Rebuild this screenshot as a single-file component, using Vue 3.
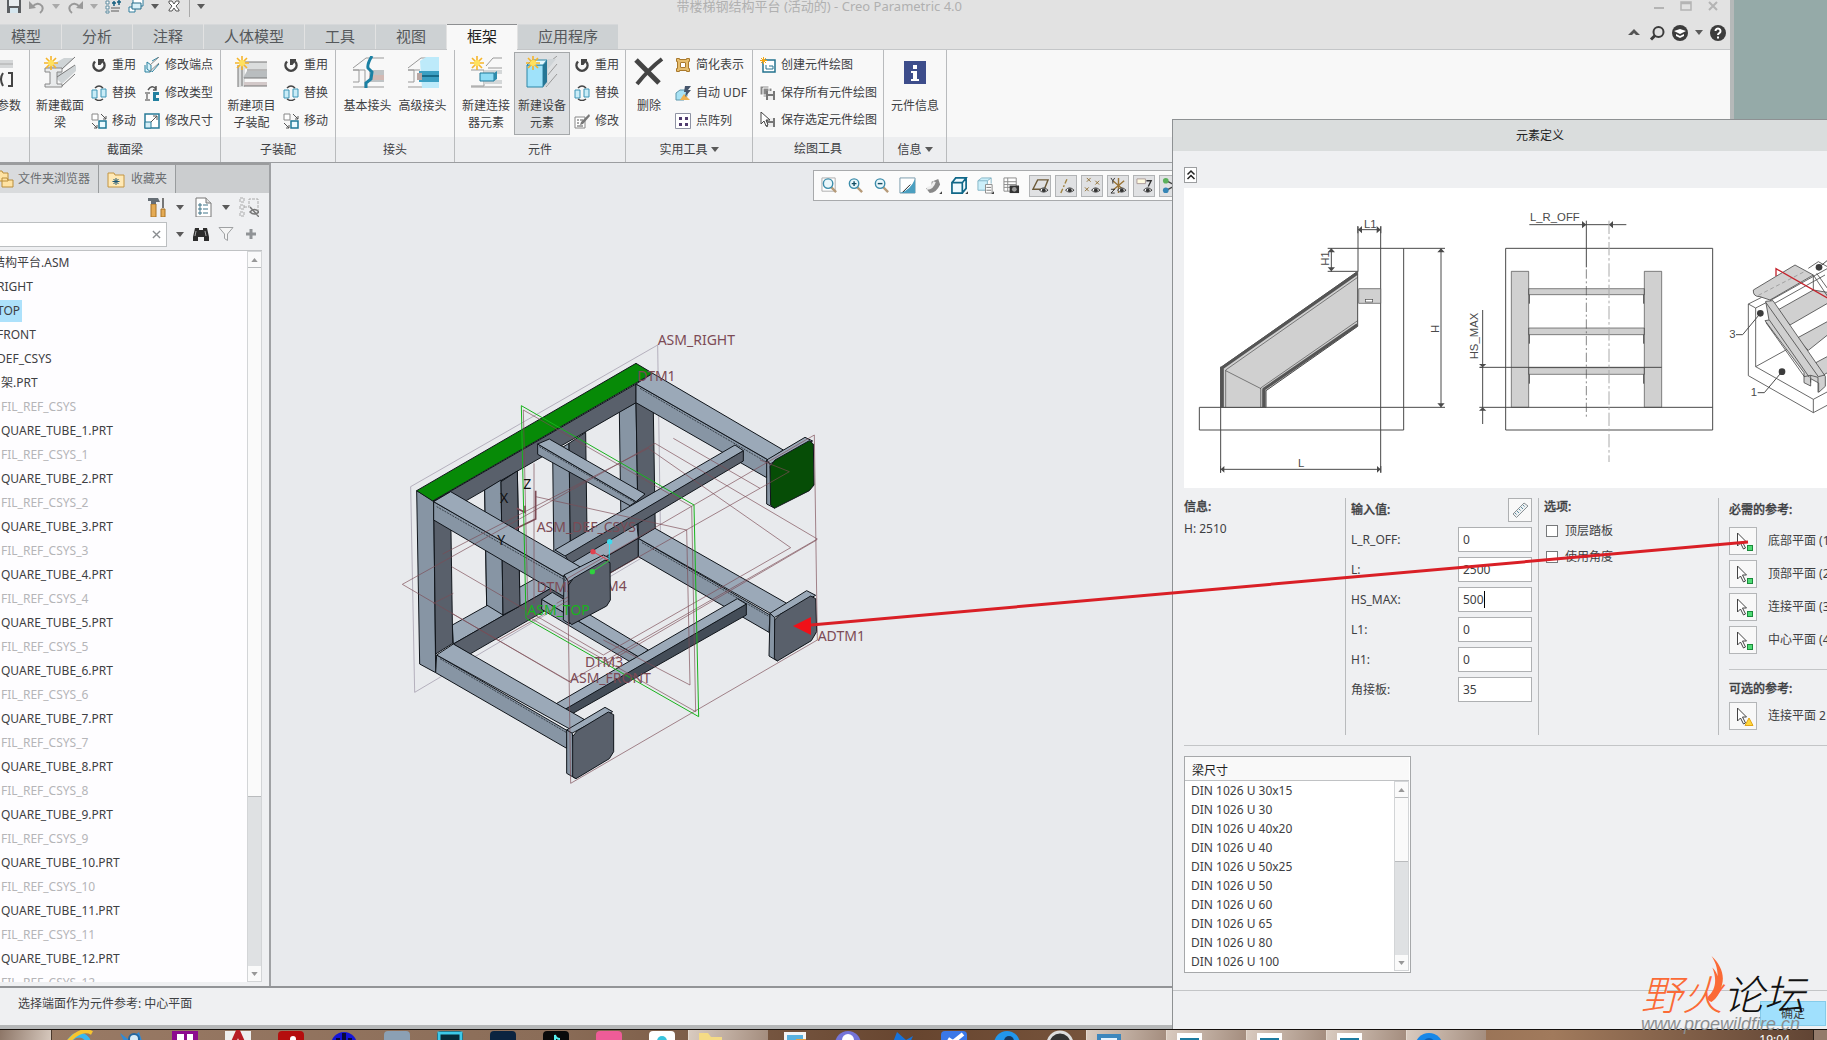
<template>
  <div class="desktop">
    <div class="workspace">
      <main class="creo">
        <header class="titlebar">
          <div class="quick">
            <template v-for="(q, i) in quickTools" :key="i">
              <span v-if="q === '|'" class="quick-sep"></span>
              <button v-else :class="q.startsWith('caret') ? 'caret-btn' : 'quick-btn'" :aria-label="q">
                <svg :viewBox="q.startsWith('caret') ? '0 0 8 5' : '0 0 16 16'" v-html="icons[q]"></svg>
              </button>
            </template>
          </div>
          <h1>带楼梯钢结构平台 (活动的) - Creo Parametric 4.0</h1>
          <div class="window-buttons">
            <button aria-label="最小化"><svg viewBox="0 0 12 12"><path d="M1 8h10" stroke="#b4b4b4" stroke-width="2" /></svg></button>
            <button aria-label="最大化"><svg viewBox="0 0 12 12"><path d="M1 2h10v8H1zM1 3.500h10" fill="none" stroke="#b4b4b4" stroke-width="1.500" /></svg></button>
            <button aria-label="关闭"><svg viewBox="0 0 12 12"><path d="M2 2l8 8M10 2l-8 8" stroke="#b4b4b4" stroke-width="2" /></svg></button>
          </div>
        </header>

        <nav class="tabs">
          <button v-for="tab in tabs" :key="tab" :class="['tab', { active: tab === activeTab }]" @click="activeTab = tab">{{ tab }}</button>
          <div class="tab-tools">
            <button aria-label="折叠"><svg viewBox="0 0 16 16"><path d="M2 10l6-6 6 6h-4L8 8l-2 2z" fill="#555" /></svg></button>
            <button aria-label="搜索"><svg viewBox="0 0 16 16"><circle cx="9.500" cy="7" r="5" fill="none" stroke="#3c3c3c" stroke-width="2" /><path d="M6 10.500L2 14.500" stroke="#3c3c3c" stroke-width="3" /></svg></button>
            <button aria-label="学习"><svg viewBox="0 0 16 16"><circle cx="8" cy="8" r="8" fill="#3c3c3c" /><path d="M2 6l6-2 6 2-6 3zM4 9l4 2 4-2v2l-4 2-4-2z" fill="#fff" /></svg></button>
            <button class="caret-btn" aria-label="更多"><svg viewBox="0 0 8 5" v-html="icons.caret"></svg></button>
            <button aria-label="帮助"><svg viewBox="0 0 16 16"><circle cx="8" cy="8" r="8" fill="#3c3c3c" /><path d="M5.500 6a2.500 2.500 0 1 1 3.800 2.100C8.300 8.700 8 9 8 10M8 11.500v2" fill="none" stroke="#fff" stroke-width="2" /></svg></button>
          </div>
        </nav>

        <section class="ribbon">
          <div v-for="(group, g) in groups" :key="g" :class="['group', group.cls]">
            <div class="group-body">
              <button v-for="b in group.big" :key="b.icon" :class="['big', { pressed: b.pressed }]">
                <svg viewBox="0 0 32 32" v-html="icons[b.icon]"></svg>
                <span v-for="line in b.lines" :key="line">{{ line }}</span>
              </button>
              <div v-for="(col, c) in group.cols" :key="c" class="small-col">
                <button v-for="s in col" :key="s[1]" class="small">
                  <svg viewBox="0 0 16 16" v-html="icons[s[0]]"></svg>
                  <span>{{ s[1] }}</span>
                </button>
              </div>
            </div>
            <div class="group-label">
              {{ group.label }}
              <svg v-if="group.menu" viewBox="0 0 8 5" v-html="icons.caret"></svg>
            </div>
          </div>
        </section>

        <div class="body">
          <aside class="navigator">
            <div class="nav-tabs">
              <button class="nav-tab browser"><svg viewBox="0 0 18 18" v-html="icons.folders"></svg>文件夹浏览器</button>
              <button class="nav-tab"><svg viewBox="0 0 18 18" v-html="icons.favorites"></svg>收藏夹</button>
            </div>
            <div class="nav-tools">
              <button aria-label="设置"><svg viewBox="0 0 20 20" v-html="icons.hammer"></svg></button>
              <button class="caret-btn" aria-label="设置菜单"><svg viewBox="0 0 8 5" v-html="icons.caret"></svg></button>
              <button aria-label="显示"><svg viewBox="0 0 20 20" v-html="icons.page"></svg></button>
              <button class="caret-btn" aria-label="显示菜单"><svg viewBox="0 0 8 5" v-html="icons.caret"></svg></button>
              <button aria-label="隐藏"><svg viewBox="0 0 20 20" v-html="icons.treeHide"></svg></button>
            </div>
            <div class="search-row">
              <div class="search-box">
                <input v-model="search" type="text" aria-label="搜索树">
                <button aria-label="清除" @click="search = ''"><svg viewBox="0 0 10 10"><path d="M1 1l8 8M9 1L1 9" stroke="#8a8d90" stroke-width="1.500" /></svg></button>
              </div>
              <button class="caret-btn" aria-label="搜索菜单"><svg viewBox="0 0 8 5" v-html="icons.caret"></svg></button>
              <button aria-label="查找"><svg viewBox="0 0 16 16" v-html="icons.binoculars"></svg></button>
              <button aria-label="过滤"><svg viewBox="0 0 16 16"><path d="M1 1.500h14L9.500 8v6.500l-3-2V8z" fill="#f5f5f5" stroke="#9fa1a3" /></svg></button>
              <button aria-label="添加"><svg viewBox="0 0 16 16"><path d="M8 3v10M3 8h10" stroke="#909396" stroke-width="3" /></svg></button>
            </div>
            <div class="tree">
              <ul>
                <li v-for="(node, n) in tree" :key="n" :class="node.kind">
                  <span :class="{ selected: node.selected }">{{ node.name }}</span>
                </li>
              </ul>
              <div class="scrollbar">
                <button aria-label="向上"><svg viewBox="0 0 8 5"><path d="M0 5l4-5 4 5z" fill="#989898" /></svg></button>
                <div class="thumb"></div>
                <div class="track"></div>
                <button aria-label="向下"><svg viewBox="0 0 8 5"><path d="M0 0h8L4 5z" fill="#989898" /></svg></button>
              </div>
            </div>
          </aside>

          <section class="canvas">
            <div class="view-tools">
              <button v-for="(v, i) in viewTools" :key="v" :class="{ on: i > 7 }" :aria-label="v">
                <svg viewBox="0 0 18 18" v-html="icons[v]"></svg>
              </button>
            </div>
            <svg class="model" viewBox="0 0 1350 1440">
              <path d="M74 1117L62 500 803 75 812 680z" fill="none" stroke="#9a92a5" stroke-width="2" />
              <g stroke="#10151b" stroke-width="3" stroke-linejoin="round">
                <polygon v-for="(f, i) in faces" :key="i" :points="f[1]" :fill="faceColors[f[0]]" />
              </g>
              <path d="M750 205L1132 428M140 560L528 782M150 1016L530 1238M756 668L1138 890M448 380L736 548" fill="none" stroke="#10151b" stroke-width="2" stroke-dasharray="6 3" />
              <g fill="none" stroke="#7c4b55" stroke-width="2">
                <path d="M37 793L795 370l487 287L537 1085z" />
                <path d="M158 702L775 385l427 298L640 1005 185 740M130 850l60-30M185 880l355 205M325 960l230-130" />
                <path d="M432 430v420M400 270L905 560l12 615L414 890zM437 530L890 630l10 465-260-135" />
                <path d="M1273 345l9 615L542 1390l-9-615zM500 850l610-345-260-150M640 1035l640-375M1110 420l88 35-88 50" />
                <path d="M380 565l25 12v-20M437 512v85l-62 30" stroke-width="5" />
              </g>
              <path d="M394 257L912 555l14 635L408 895z" fill="none" stroke="#18b31c" stroke-width="3" />
              <g class="datum">
                <text x="803" y="75">ASM_RIGHT</text>
                <text x="742" y="183">DTM1</text>
                <text x="440" y="635">ASM_DEF_CSYS</text>
                <text x="440" y="817">DTM2</text>
                <text x="625" y="813">TM4</text>
                <text x="585" y="1040">DTM3</text>
                <text x="540" y="1088">ASM_FRONT</text>
                <text x="1283" y="963">ADTM1</text>
                <text x="400" y="507" class="axis-name">Z</text>
                <text x="330" y="549" class="axis-name">X</text>
                <text x="322" y="676" class="axis-name">Y</text>
              </g>
              <polygon :points="plate" fill="#5a616c" stroke="#10151b" stroke-width="3" />
              <text class="datum-top" x="412" y="885">ASM_TOP</text>
              <g stroke-width="3">
                <path d="M659 665l-2 57" stroke="#3ddcf0" /><circle cx="659" cy="665" r="8" fill="#3ddcf0" />
                <path d="M609 695l48 27" stroke="#e2404f" /><circle cx="609" cy="695" r="8" fill="#e2404f" />
                <path d="M607 755l50-33" stroke="#2fd23e" /><circle cx="607" cy="755" r="8" fill="#2fd23e" />
              </g>
            </svg>
          </section>
        </div>

        <footer class="status">选择端面作为元件参考: 中心平面</footer>
      </main>

      <section class="dialog" aria-label="元素定义">
        <h2>元素定义</h2>
        <div class="dialog-body">
          <button class="collapse" aria-label="折叠"><svg viewBox="0 0 12 14"><path d="M2.500 6.500L6 3l3.500 3.500M2.500 11L6 7.500 9.500 11" fill="none" stroke="#222" stroke-width="1.500" /></svg></button>
          <div class="diagram">
            <svg viewBox="72 264 1929 900">
              <g fill="none" stroke="#4a4a4a" stroke-width="3">
                <path d="M118 922h737M118 922v68h613V445M503 445h352M503 514h90M182 800v318M662 380v738M594 380v135M182 1108h480M594 389h68M514 445v70M843 445v477M968 630v342M958 802h10M958 922h80" />
                <path d="M183 802L593 514v165L318 872v50H183z" fill="#d0d0d0" />
                <path d="M186 804L592 520M592 674L312 867v55M187 802v120" stroke="#555" stroke-width="9" />
                <path d="M197 922V810L593 532M593 662L302 864v58M197 812l106 54M307 922v-54" stroke-width="2" />
                <path d="M596 566h66v44h-66z" fill="#d0d0d0" stroke-width="2" />
                <rect x="616" y="598" width="22" height="8" fill="#fff" stroke-width="2" />
              </g>
              <g fill="#4a4a4a">
                <path d="M594 389l12-11v22zM662 389l-12-11v22zM182 1108l11-10v20zM662 1108l-11-10v20zM514 445l-11 12h22zM514 514l-11-12h22zM843 445l-11 12h22zM843 922l-11-12h22zM968 802l-11-10h22zM968 922l-11 10h22z" />
                <path d="M592 378h3v22h-3zM661 378h3v22h-3zM180 1098h3v20h-3zM661 1098h3v20h-3z" />
              </g>
              <g class="dimension">
                <text x="612" y="384">L1</text>
                <text x="414" y="1102">L</text>
                <text transform="translate(507 497) rotate(-90)">H1</text>
                <text transform="translate(836 699) rotate(-90)">H</text>
                <text transform="translate(954 778) rotate(-90)">HS_MAX</text>
              </g>
              <g transform="translate(960 0)">
                <g fill="none" stroke="#4a4a4a" stroke-width="3">
                  <path d="M77 445h621v545H77z" />
                  <path d="M94 514h52v408H94zM493 514h52v408h-52zM146 566h347v18H146zM146 684h347v20H146zM146 803h347v20H146z" fill="#d0d0d0" stroke-width="2" />
                  <path d="M77 922h621M0 802h545M148 584v27M148 704v27M148 823v28M491 584v27M491 704v27M491 823v28M148 374h291M319 362v140" />
                  <path d="M319 508v450" stroke-dasharray="28 8 6 8" stroke-width="2" />
                  <path d="M387 362v724" stroke="#aaa" stroke-dasharray="40 8 8 8" />
                </g>
                <path d="M319 374l-13-11v22zM387 374l12-11v22z" fill="#4a4a4a" />
                <g class="dimension">
                  <text x="150" y="362">L_R_OFF</text>
                  <text x="748" y="715">3</text>
                  <text x="812" y="889">1</text>
                </g>
                <!-- isometric stair -->
                <g stroke="#4a4a4a" stroke-width="2.500" fill="none" stroke-linejoin="round">
                  <path d="M805 612v215l195 111 60-32M805 612l40-20M805 612l22 12v176l173 98 60-32M827 624l35-18M827 800l105-58M1000 898v40M1000 528v45" />
                  <path d="M820 570l125-75 55 30-130 75-30-10q-22 0-20-20z" fill="#d0d0d0" />
                  <path d="M870 602l175-98M875 615l160-90M985 505l30-20 45 25" />
                  <path d="M890 632l110-62 60 10v20l-130 75zM950 715l110-60v36l-75 60zM1000 792l60-32v48l-35 20z" fill="#d0d0d0" />
                  <path d="M855 662l12-2-10-56 22-2 157 227v30l-20 18v-28l-24-13v22l-20-10v-30z" fill="#d0d0d0" />
                  <path d="M858 608l157 222 20-5M868 660l120 172M858 668l115 162M972 830l20-4 22 6v45M992 826v22M1000 525l60 90M1010 520l50 70" />
                </g>
                <path d="M835 586l140-72" stroke="#888" stroke-width="2" stroke-dasharray="12 8" />
                <path d="M888 528v-22l172 98" fill="none" stroke="#c4242d" stroke-width="4" />
                <path d="M768 704h20l53-64M833 878h20l53-63M1017 502l30-25" fill="none" stroke="#4a4a4a" stroke-width="3" />
                <g fill="#3c3c3c"><circle cx="841" cy="640" r="10" /><circle cx="906" cy="815" r="10" /><circle cx="1017" cy="502" r="10" /></g>
              </g>
            </svg>
          </div>

          <div class="form">
            <section class="col info">
              <h3>信息:</h3>
              <p>H: 2510</p>
            </section>
            <section class="col values">
              <div class="values-head">
                <h3>输入值:</h3>
                <button class="ruler" aria-label="测量"><svg viewBox="0 0 18 18"><path d="M2 13L13 2l4 3L5.500 16.500z" fill="#eef1f2" stroke="#8a9094" /><path d="M6 10l2 2M8 8l1.500 1.500M10 6l2 2M12 4l1.500 1.500M4 12l1.500 1.500" stroke="#5d8da0" /></svg></button>
              </div>
              <div v-for="field in fields" :key="field.label" class="field">
                <label :for="'f-' + field.label">{{ field.label }}:</label>
                <div :class="['box', { editing: field.editing }]">
                  <input :id="'f-' + field.label" v-model="field.value" type="text">
                  <span v-if="field.editing" class="edit-caret"></span>
                </div>
              </div>
            </section>
            <section class="col options">
              <h3>选项:</h3>
              <label v-for="opt in options" :key="opt.label"><input v-model="opt.checked" type="checkbox">{{ opt.label }}</label>
            </section>
            <section class="col refs">
              <h3>必需的参考:</h3>
              <div v-for="r in required" :key="r" class="ref">
                <button :aria-label="r"><svg viewBox="0 0 28 28"><path v-bind="cursor" /><rect x="18.500" y="18.500" width="5" height="5" fill="#4fdb74" stroke="#1b8a3c" /></svg></button>
                <span>{{ r }}</span>
              </div>
              <hr>
              <h3>可选的参考:</h3>
              <div class="ref">
                <button aria-label="连接平面 2"><svg viewBox="0 0 28 28"><path v-bind="cursor" /><path d="M20 16l4 7.500h-8z" fill="#ffd83b" stroke="#e2a416" /></svg></button>
                <span>连接平面 2</span>
              </div>
            </section>
          </div>

          <div class="sizes">
            <div class="sizes-head">梁尺寸</div>
            <div class="sizes-body">
              <ul>
                <li v-for="size in sizes" :key="size">DIN 1026 U {{ size }}</li>
              </ul>
              <div class="scrollbar">
                <button aria-label="向上"><svg viewBox="0 0 8 5"><path d="M0 5l4-5 4 5z" fill="#989898" /></svg></button>
                <div class="thumb"></div>
                <div class="track"></div>
                <button aria-label="向下"><svg viewBox="0 0 8 5"><path d="M0 0h8L4 5z" fill="#989898" /></svg></button>
              </div>
            </div>
          </div>
        </div>
        <div class="dialog-footer">
          <button class="ok">确定</button>
        </div>
      </section>
    </div>

    <nav class="taskbar">
      <span class="task-start"></span>
      <button v-for="(t, i) in tasks" :key="i" :class="['task', { lit: t.lit }]" aria-label="任务">
        <svg viewBox="0 0 28 28" v-html="t.art"></svg>
      </button>
      <span class="clock">19:04</span>
      <span class="show-desktop"></span>
    </nav>

    <svg class="arrow" viewBox="0 0 956 86">
      <path d="M955 1L18 84" stroke="#d91f26" stroke-width="3" />
      <path d="M0 85l18-9v18z" fill="#f01018" />
    </svg>

    <div class="watermark">
      <div class="brand"><span class="wild">野火</span><span>论坛</span></div>
      <svg class="flame" viewBox="0 0 18 52"><path d="M5 0c10 9 15 21 12 32-2 10-6 16-12 20-4-1-5-4-4-6 8-7 11-18 5-33 4 4 5 7 6 10C12 13 9 6 5 0z" fill="#fb6a36" /></svg>
      <div class="site">www.proewildfire.cn</div>
    </div>
  </div>
</template>

<script setup>
import { ref, reactive } from 'vue';

const activeTab = ref('框架');
const search = ref('');

const tabs = ['模型', '分析', '注释', '人体模型', '工具', '视图', '框架', '应用程序'];
const quickTools = ['save', 'undo', 'caretGray', 'redo', 'caretGray', 'regen', 'windows', 'caret', 'closeWin', '|', 'caret'];
const viewTools = ['zoomFit', 'zoomIn', 'zoomOut', 'repaint', 'shade', 'cube', 'views', 'manager', 'plane', 'axis', 'points', 'csys', 'notes', 'spin'];

const star = '<path d="M7 0v14M0 7h14M2 2l10 10M12 2L2 12" stroke="#f5b52a" stroke-width="1.6"/><circle cx="7" cy="7" r="3" fill="#ffe15e"/>';
const eye = '<path d="M8 14q4-5 9 0q-5 4-9 0z" fill="#fff" stroke="#333"/><circle cx="12.500" cy="14" r="2" fill="#333"/>';
const lens = '<path d="M11 11l5 5" stroke="#b59a78" stroke-width="2.500"/><circle cx="7.500" cy="7" r="5" fill="#eaf7fb" stroke="#3c8dab" stroke-width="1.500"/>';
const disk = '<path d="M6 6h9v9H6z" fill="#777"/><path d="M8 6h5v3H8zM8 11h5v4H8z" fill="#eee"/>';

const icons = {
  caret: '<path d="M0 0h8L4 5z" fill="#5a5a5a"/>',
  caretGray: '<path d="M0 0h8L4 5z" fill="#aaa"/>',
  save: '<path d="M1 1h14v14H1z" fill="#5c5f62"/><path d="M3 1h10v7H3z" fill="#e8edf0"/><path d="M4 10h8v5H4z" fill="#d6e6ee"/>',
  undo: '<path d="M3 9q6-6 10-1 2 4-2 7" fill="none" stroke="#999" stroke-width="2"/><path d="M0 11V3l7 7z" fill="#999"/>',
  redo: '<path d="M13 9Q7 3 3 8q-2 4 2 7" fill="none" stroke="#999" stroke-width="2"/><path d="M16 11V3l-7 7z" fill="#999"/>',
  regen: '<path d="M1 3h3v3H1zM1 8h3v3H1zM1 13h3v2H1z" fill="#fff" stroke="#5e8ca0"/><path d="M6 10h9M6 13h8" stroke="#888" stroke-width="1.500"/><path d="M7 5h4M9 3v5M12 4h4M14 2v5" stroke="#165f80" stroke-width="1.500"/>',
  windows: '<path d="M5 1h10v7H5zM1 9h6v5H1z" fill="#fff" stroke="#2f7d9c"/><path d="M4 5h9v6H4z" fill="#d8f0f8" stroke="#246b88"/>',
  closeWin: '<path d="M3 3h3l2 3 2-3h3v2l-3 3 3 4v1h-3l-2-3-2 3H3v-1l3-4-3-3z" fill="#fff" stroke="#555"/>',
  param: '<path d="M0 4h31v8H14L0 24z" fill="#d6d8d9"/><path d="M16 8h15" stroke="#aaa"/><path d="M21 17q-4 6 0 13M26 17h4v13h-4" fill="none" stroke="#444" stroke-width="2"/>',
  beam: '<path d="M2 12L20 2h10L18 13v4l14-8v6L18 28z" fill="#cfd4d6"/><path d="M1 12h17v4h-5v12h5v3H1v-3h5V16H1z" fill="#e9ebec" stroke="#888"/><path d="M18 13L31 1M13 21L31 9M18 30L31 18" stroke="#777"/>' + star,
  reuse: '<path d="M4 4.500A5.500 5.500 0 1 0 12 4.500" fill="none" stroke="#444" stroke-width="2.500"/><path d="M7 2h6v1.500L9.500 8H7z" fill="#444"/>',
  replace: '<path d="M1 5h5v8H1zM10 4h5v8h-5z" fill="#c9ecf7" stroke="#3c94b5"/><path d="M4 3q4-4 8 0M12 14q-4 3-8 0" fill="none" stroke="#444" stroke-width="1.500"/>',
  move: '<path d="M1 1h6v6H1z" fill="#fff" stroke="#888"/><path d="M8 8h7v7H8z" fill="#eafaff" stroke="#1e7896" stroke-width="1.500"/><path d="M10 1l5 5M15 3v3h-3M1 10l5 5M6 12v3H3" fill="none" stroke="#555"/>',
  endpoint: '<path d="M3 5l4 3v7l-4-3zM8 4L15 0M8 15l7-8M1 8v7h5" fill="#d5f2fb" stroke="#2a809e"/><path d="M6 8l9-8M5 15l10-9" stroke="#888"/>',
  sectype: '<path d="M1 7h5v2H4v5h2v2H1v-2h1V9H1z" fill="#999"/><path d="M9 7h6v3h-3v3h3v3H9z" fill="#22809f"/><path d="M4 5q4-6 8-1M12 1v4H9" fill="none" stroke="#555" stroke-width="1.500"/>',
  resize: '<path d="M1 1h14v14H1z" fill="#fff" stroke="#287b98" stroke-width="1.500"/><path d="M1 9h6v6H1z" fill="#d3eef7" stroke="#287b98"/><path d="M7 9l6-6M9 3h4v4" fill="none" stroke="#555"/>',
  project: '<path d="M6 6h26v7H10v18H3V10z" fill="#dbdddd"/><path d="M12 15h20v7H8z" fill="#b9bdbf"/><path d="M9 26h23v4H9z" fill="#d3c9c9"/><path d="M3 9v22M7 11v19M8 6h24M12 14h20M9 22h23M9 30h23" stroke="#777"/>' + star,
  joint: '<path d="M1 12L14 2h18M1 14h12v18M1 14h6v12H1M1 31h31" fill="none" stroke="#999"/><path d="M17 14h15v12H17z" fill="#bfc3c5"/><path d="M17 19h15v5H17z" fill="#d2b9b4"/><path d="M20 0q-5 8-4 12l4 4-1 7-5 4v5" fill="none" stroke="#1b80a3" stroke-width="3"/>',
  joint2: '<path d="M1 12L14 2h18M1 14h12M1 14h6v12H1M1 31h31" fill="none" stroke="#999"/><path d="M13 5l6-4h13v31H15z" fill="#bdeafa"/><path d="M12 15h20v11H12z" fill="#3b9fc2"/><path d="M12 20h20" stroke="#176b89" stroke-width="2"/><path d="M10 17h5v7h-5z" fill="#b9a6a2"/>',
  connector: '<path d="M1 14h13v16H1M16 10l7-8h9M1 31h31M18 12h14M14 26h18" fill="none" stroke="#999"/><path d="M14 14h18v4H14zM14 24h18v4H14z" fill="#d4d7d8"/><path d="M10 17h14v8H10z" fill="#8fdcf5" stroke="#1e7899"/><path d="M24 17l3-2v8l-3 2z" fill="#2f8cac"/>' + star,
  equipment: '<path d="M20 9L31 0M21 20L31 8M20 31l11-13" stroke="#999"/><path d="M17 10l5-7h8L22 13v16l-5 2z" fill="#cfd4d7"/><path d="M1 9h16v22H1z" fill="#9fe2fa" stroke="#2d86a6"/><path d="M17 9l4-5v22l-4 5z" fill="#267695"/><path d="M1 9l5-5h15l-4 5z" fill="#e3f8ff" stroke="#2d86a6"/>' + star,
  modify: '<path d="M1 4h10v11H1z" fill="#fff" stroke="#888"/><path d="M3 7h2M3 10h2M3 13h6M6 7h3" stroke="#555"/><path d="M15 1l-8 8-1 3 3-1 7-8z" fill="#777"/>',
  remove: '<path d="M3 4l23 23" stroke="#444" stroke-width="5"/><path d="M29 3Q17 12 4 28" fill="none" stroke="#444" stroke-width="4"/>',
  simplify: '<path d="M3.500 3.500h9v9h-9z" fill="#fff" stroke="#e6bd6d" stroke-width="3"/><path d="M1.500 1.500h3v1h7v-1h3v3h-1v7h1v3h-3v-1h-7v1h-3v-3h1v-7h-1zM5.500 5.500h5v5h-5z" fill="none" stroke="#a9792c"/>',
  udf: '<path d="M1 8l4-3h7v6l-3 4H1z" fill="#a8e2f4" stroke="#5d96ab"/><path d="M9 9l6 6H5z" fill="#efb14d"/><path d="M10 1h6l-3 4h3l-6 7 1-5H9z" fill="#46566b"/>',
  dots: '<path d="M.5.500h15v15H.5z" fill="#fff" stroke="#8f93a3"/><path d="M4 4h3v3H4zM10 4h3v3h-3zM4 10h3v3H4zM10 10h3v3h-3z" fill="#503b6e"/>',
  create: '<path d="M3 3h12v12H3z" fill="#fff" stroke="#24738f" stroke-width="1.500"/><path d="M6 8v4h7V9H9" fill="none" stroke="#24738f"/><path d="M3.500 0v7M0 3.500h7M1 1l5 5M6 1L1 6" stroke="#f3a713"/>',
  saveAll: '<path d="M0 1h9v9H0zM3 3h9v9H3z" fill="#888" stroke="#fff"/>' + disk,
  saveSel: disk + '<path d="M1 0v12l3-3 2 5 2-1-2-5h4z" fill="#fff" stroke="#444"/>',
  info: '<path d="M5 5h22v23H5z" fill="#3d4d8b"/><path d="M14 9h4v4h-4zM12 15h6v8h2v2h-8v-2h2v-6h-2z" fill="#fff"/>',
  folders: '<path d="M1 1h5l1 2h5v8H1zM6 8h5l1 2h5v7H6z" fill="#ffe3a3" stroke="#b98d3a"/>',
  favorites: '<path d="M1 3h6l1 2h9v12H1z" fill="#ffe9b5" stroke="#c39543"/><path d="M9 8v7M5.500 11.500h7M6.500 9l5 5M11.500 9l-5 5" stroke="#1c5674"/>',
  hammer: '<path d="M4 7h5v13H4z" fill="#e5ab54" stroke="#a87327"/><path d="M1 1h10l2 4H9v2H4V4H1z" fill="#666e75"/><path d="M15 1h2v10h-2z" fill="#777"/><path d="M14 12h4v8h-4z" fill="#e5ab54" stroke="#a87327"/>',
  page: '<path d="M3 1h10l5 5v14H3z" fill="#fff" stroke="#777"/><path d="M13 1v5h5" fill="#ddd" stroke="#777"/><path d="M6 7h2v2H6zM6 11h2v2H6zM6 15h2v2H6zM10 8h5M10 12h5M10 16h5" stroke="#3e7489" fill="none"/>',
  treeHide: '<path d="M1 1h4v4H1zM1 8h4v4H1zM1 15h4v4H1zM5 10h5V2h9v12" fill="none" stroke="#aaa" stroke-dasharray="3 1"/><path d="M11 15q4-5 9 0q-5 4-9 0zM11 10l9 10" fill="none" stroke="#777" stroke-width="1.500"/>',
  binoculars: '<path d="M2 2h4v2h4V2h4l2 9v4h-5v-4H5v4H0v-4z" fill="#2c2c2c"/><path d="M3 5L2 10M12 5l1 5" stroke="#aaa"/>',
  zoomFit: '<path d="M1 1h14v14H1z" fill="#fff" stroke="#aaa"/>' + lens,
  zoomIn: lens + '<path d="M7.500 4.500v5M5 7h5" stroke="#134d63" stroke-width="1.500"/>',
  zoomOut: lens + '<path d="M5 7h5" stroke="#134d63" stroke-width="1.500"/>',
  repaint: '<path d="M1 1h16v16H1z" fill="#fff" stroke="#79a"/><path d="M17 2v15H1q11-3 16-15z" fill="#4b9fc0"/><path d="M12 8l-8 8" stroke="#222"/>',
  shade: '<path d="M1 12q7 0 6-7l7-3 2 6q-4 9-11 9z" fill="#888"/><path d="M2 12q6 0 8-7" stroke="#eee" stroke-width="3" fill="none"/><path d="M18 15v3h-3z" fill="#444"/>',
  cube: '<path d="M1 6h11v11H1zM1 6l4-5h11l-4 5M16 1v11l-4 5" fill="#eefaff" stroke="#0f6788" stroke-width="1.800"/><path d="M18 15v3h-3z" fill="#444"/>',
  views: '<path d="M1 4h10v10H1zM1 4l4-3h10l-4 3M15 1v6" fill="#cceffa" stroke="#83b5c6"/><path d="M9 8h7v9H9z" fill="#fff" stroke="#888"/><path d="M10 11h5M10 14h5" stroke="#777"/><path d="M18 15v3h-3z" fill="#444"/>',
  manager: '<path d="M1 1h13v14H1zM1 5h13M1 8h13M1 11h13M5 1v14" fill="#fff" stroke="#888"/><path d="M7 9h10v8H7z" fill="#333"/><circle cx="12" cy="13" r="2.500" fill="#999"/>',
  plane: '<path d="M1 13L6 3h11l-4 10z" fill="none" stroke="#6c5a39" stroke-width="1.500"/>' + eye,
  axis: '<path d="M3 17L10 1" stroke="#a08442" stroke-width="1.500" stroke-dasharray="5 2 2 2"/>' + eye,
  points: '<path d="M3 1l4 4M7 1L3 5M12 4l4 4M16 4l-4 4M1 11l4 4M5 11l-4 4" stroke="#8e6f35"/>' + eye,
  csys: '<path d="M9 1v16M3 4l12 10M15 4L3 14" stroke="#9a7436" stroke-width="1.500"/><path d="M1 1l2 3 2-3M3 4v3M1 13h4l-4 4h4" stroke="#333" fill="none"/>' + eye,
  notes: '<path d="M1 2h9v5H1z" fill="#fffbe0" stroke="#a99"/><path d="M11 4h5l-3 6" stroke="#333" stroke-width="1.500" fill="none"/>' + eye,
  spin: '<path d="M5 4l9 5-9 5" fill="none" stroke="#444" stroke-width="1.500"/><circle cx="4" cy="4" r="3" fill="#5bb05b"/><circle cx="4" cy="14" r="3" fill="#3585b5"/>'
};

const groups = [
  { cls: 'g-param', label: '', big: [{ icon: 'param', lines: ['参数'] }], cols: [] },
  {
    cls: 'g-section', label: '截面梁',
    big: [{ icon: 'beam', lines: ['新建截面', '梁'] }],
    cols: [
      [['reuse', '重用'], ['replace', '替换'], ['move', '移动']],
      [['endpoint', '修改端点'], ['sectype', '修改类型'], ['resize', '修改尺寸']]
    ]
  },
  {
    cls: 'g-sub', label: '子装配',
    big: [{ icon: 'project', lines: ['新建项目', '子装配'] }],
    cols: [[['reuse', '重用'], ['replace', '替换'], ['move', '移动']]]
  },
  {
    cls: 'g-joint', label: '接头',
    big: [{ icon: 'joint', lines: ['基本接头'] }, { icon: 'joint2', lines: ['高级接头'] }],
    cols: []
  },
  {
    cls: 'g-element', label: '元件',
    big: [
      { icon: 'connector', lines: ['新建连接', '器元素'] },
      { icon: 'equipment', lines: ['新建设备', '元素'], pressed: true }
    ],
    cols: [[['reuse', '重用'], ['replace', '替换'], ['modify', '修改']]]
  },
  {
    cls: 'g-util', label: '实用工具', menu: true,
    big: [{ icon: 'remove', lines: ['删除'] }],
    cols: [[['simplify', '简化表示'], ['udf', '自动 UDF'], ['dots', '点阵列']]]
  },
  {
    cls: 'g-draw', label: '绘图工具', big: [],
    cols: [[['create', '创建元件绘图'], ['saveAll', '保存所有元件绘图'], ['saveSel', '保存选定元件绘图']]]
  },
  { cls: 'g-info', label: '信息', menu: true, big: [{ icon: 'info', lines: ['元件信息'] }], cols: [] }
];

const tree = [
  { name: '结构平台.ASM', kind: 'root' },
  { name: 'RIGHT', kind: 'datum-node' },
  { name: 'TOP', kind: 'datum-node', selected: true },
  { name: 'FRONT', kind: 'datum-node' },
  { name: 'DEF_CSYS', kind: 'datum-node' },
  { name: '架.PRT', kind: 'part' },
  { name: 'FIL_REF_CSYS', kind: 'csys' }
];
for (let i = 1; i <= 12; i++) {
  tree.push({ name: `QUARE_TUBE_${i}.PRT`, kind: 'part' });
  tree.push({ name: `FIL_REF_CSYS_${i}`, kind: 'csys' });
}

// faces of the steel frame, listed from back to front
const faceColors = { t: '#9ba9b8', l: '#8795a4', d: '#59606b', k: '#444d58', g: '#078a07', e: '#064d06' };
const faces = [
  ['l', '284,510 333,480 339,885 290,860'],
  ['d', '333,480 382,453 390,858 339,885'],
  ['l', '488,400 537,370 542,720 492,745'],
  ['d', '537,370 587,337 592,720 542,750'],
  ['l', '688,275 738,248 745,655 694,690'],
  ['d', '738,248 790,275 796,640 745,655'],
  ['d', '128,545 738,192 738,248 128,600'],
  ['t', '187,915 740,605 745,655 190,972'],
  ['d', '190,972 745,655 745,710 240,1002'],
  ['l', '284,510 333,480 339,885 290,855'],
  ['d', '333,485 382,453 390,858 339,885'],
  ['l', '80,512 131,543 137,1058 89,1032'],
  ['d', '131,545 182,570 188,970 137,1002'],
  ['g', '80,512 738,130 788,160 128,543'],
  ['l', '738,192 1135,420 1130,473 738,248'],
  ['t', '738,192 788,160 1180,390 1135,420'],
  ['l', '745,655 1140,885 1137,937 745,710'],
  ['t', '745,655 795,625 1190,850 1150,885'],
  ['l', '443,372 738,545 720,557 443,403'],
  ['t', '443,372 478,357 765,522 738,545'],
  ['l', '455,838 745,1010 718,1024 455,868'],
  ['t', '455,838 487,817 775,990 745,1010'],
  ['d', '525,705 1060,392 1060,423 540,732'],
  ['t', '495,690 1035,375 1060,392 525,708'],
  ['k', '525,1165 1069,852 1069,885 540,1185'],
  ['t', '497,1152 1042,836 1069,852 525,1168'],
  ['l', '131,545 530,775 522,830 131,600'],
  ['t', '131,545 182,515 578,745 530,775'],
  ['l', '140,1005 532,1232 530,1285 137,1058'],
  ['t', '140,1005 190,972 582,1198 545,1230'],
  ['t', '1130,420 1245,352 1268,363 1140,432'],
  ['l', '1130,420 1140,432 1153,564 1130,552'],
  ['e', '1140,440 1155,420 1258,362 1270,372 1272,495 1258,512 1153,565 1142,555'],
  ['t', '1140,880 1250,812 1277,826 1152,893'],
  ['l', '1140,880 1154,893 1162,1023 1137,1008'],
  ['d', '1154,900 1170,883 1262,828 1277,836 1280,935 1264,962 1162,1023 1153,1015'],
  ['t', '522,765 640,705 660,715 535,785'],
  ['l', '522,765 535,785 540,912 520,900'],
  ['t', '530,1230 645,1162 668,1175 545,1240'],
  ['l', '530,1230 547,1240 558,1376 530,1360'],
  ['d', '548,1250 562,1232 655,1176 671,1184 671,1295 658,1316 558,1376 548,1370']
];
// near end plate, drawn over the datum names
const plate = '536,795 550,775 645,720 660,728 661,840 650,858 545,914 537,905';

const fields = reactive([
  { label: 'L_R_OFF', value: '0' },
  { label: 'L', value: '2500' },
  { label: 'HS_MAX', value: '500', editing: true },
  { label: 'L1', value: '0' },
  { label: 'H1', value: '0' },
  { label: '角接板', value: '35' }
]);
const options = reactive([
  { label: '顶层踏板', checked: false },
  { label: '使用角度', checked: false }
]);
const required = ['底部平面 (1)', '顶部平面 (2)', '连接平面 (3)', '中心平面 (4)'];
const sizes = ['30x15', '30', '40x20', '40', '50x25', '50', '60', '65', '80', '100'];
const cursor = { d: 'M8.500 6v13l3-3 3 6 2-1-3-6h4z', fill: '#fff', stroke: '#444' };

const creoArt = '<path d="M2 3h25v25H2z" fill="#fff"/><path d="M5 8h19v20H5z" fill="#1c7ba0"/><path d="M7 10h5v18H7z" fill="#def"/>';
const block = (bg, extra = '') => `<rect x="1" y="1" width="26" height="26" rx="4" fill="${bg}"/>${extra}`;
const tasks = [
  { art: '<circle cx="14" cy="15" r="10" fill="none" stroke="#39b8ef" stroke-width="5"/><path d="M3 12Q16-3 27 3" fill="none" stroke="#f7c52f" stroke-width="4"/>' },
  { art: '<path d="M2 3l9 7 10-8 4 12-14 8z" fill="#2f8bd8"/><circle cx="16" cy="9" r="5" fill="#d8ecf8" stroke="#2467a0" stroke-width="2"/>' },
  { art: '<path d="M1 1h26v26H1z" fill="#8c0b8f"/><path d="M6 4h7v24H6zM16 4h6v24h-6z" fill="#fff"/>' },
  { art: '<path d="M1 1h26v26H1z" fill="#eee"/><path d="M6 20L14 2l8 18" fill="none" stroke="#b71c24" stroke-width="5"/>' },
  { art: block('#b50e0e', '<circle cx="16" cy="9" r="3" fill="#fff"/>') },
  { art: '<circle cx="14" cy="15" r="13" fill="#1414d8"/><path d="M6 10h4M18 10h4M14 3v10" stroke="#0a0a3a" stroke-width="4"/>' },
  { art: block('#8ba0b4') },
  { art: block('#072a3a', '<path d="M3 3h22v22H3z" fill="none" stroke="#3dc8e8" stroke-width="3"/>') },
  { art: block('#0b2440') },
  { art: block('#0a0a0a', '<path d="M13 20V5q1 4 5 4" fill="none" stroke="#5ee" stroke-width="2"/>') },
  { art: block('#ee5c98') },
  { art: block('#fff', '<circle cx="14" cy="11" r="5" fill="#39c4dd"/>') },
  { art: '<path d="M2 3h9l3 4h11v21H2z" fill="#f5db85"/>', lit: true },
  { art: '<path d="M3 2h22v26H3z" fill="#f5f5f5"/><path d="M6 5h16v9H6z" fill="#5ab2df"/><path d="M15 9h10v12H15z" fill="#e7a140"/>' },
  { art: '<circle cx="14" cy="14" r="13" fill="#7474d8"/><circle cx="14" cy="10" r="6" fill="#fff"/>' },
  { art: '<path d="M10 2l9 8 7-4-7 16-16-2z" fill="#1673dc"/>' },
  { art: block('#3a78e8', '<path d="M8 9l5 3L23 4" fill="none" stroke="#fff" stroke-width="4"/>') },
  { art: '<circle cx="14" cy="14" r="13" fill="#2197ed"/><circle cx="16" cy="11" r="5" fill="#173a60"/>' },
  { art: '<circle cx="14" cy="14" r="12" fill="#333" stroke="#ddd" stroke-width="3"/>' },
  { art: '<path d="M2 4h24v24H2z" fill="#3d87bd"/><path d="M6 8h16v20H6z" fill="#e6f4ff"/>', lit: true },
  { art: creoArt, lit: true },
  { art: creoArt, lit: true },
  { art: creoArt, lit: true },
  { art: '<circle cx="14" cy="17" r="14" fill="#1687e8"/><circle cx="14" cy="14" r="6" fill="#0d61b5"/>', lit: true }
];
</script>

<style>
body {
  overflow: hidden;
}
</style>

<style scoped>
.desktop {
  position: relative;
  display: flex;
  flex-direction: column;
  height: 100vh;
  overflow: hidden;
  background: #95aaa8;
  font-family: "Noto Sans", "Noto Sans CJK SC", sans-serif;
  font-size: 12px;
  line-height: 16px;
  color: #3e4043;
}

* {
  box-sizing: border-box;
}

h1,
h2,
h3,
p,
ul {
  margin: 0;
  padding: 0;
  font-size: 12px;
  font-weight: 400;
  list-style: none;
}

button {
  display: flex;
  align-items: center;
  justify-content: center;
  padding: 0;
  border: none;
  background: none;
  font: inherit;
  color: inherit;
}

svg {
  display: block;
  flex: none;
}

.workspace {
  position: relative;
  display: flex;
  flex: 1;
  min-height: 0;
}

.creo {
  display: flex;
  flex-direction: column;
  flex: 1;
  min-width: 0;
  margin-right: 93px;
  border-right: 4px solid #b5b9b9;
  border-bottom: 4px solid #b5b7b8;
  background: #e2e2e2;
}

/* title bar */
.titlebar {
  display: flex;
  align-items: flex-start;
  height: 24px;
}

.quick,
.window-buttons {
  display: flex;
  align-items: center;
  height: 12px;
}

.quick {
  flex: 675 1 0;
  padding-left: 6px;
  gap: 7px;
}

.quick-btn svg {
  width: 16px;
  height: 16px;
}

.quick-sep {
  width: 1px;
  height: 22px;
  background: #aaa;
}

.caret-btn svg {
  width: 8px;
  height: 5px;
}

.titlebar h1 {
  font-size: 13px;
  line-height: 12px;
  color: #b0b0b0;
  white-space: nowrap;
}

.window-buttons {
  flex: 762 1 0;
  justify-content: flex-end;
  gap: 15px;
  padding-right: 11px;
}

.window-buttons svg {
  width: 12px;
  height: 12px;
}

/* tabs */
.tabs {
  display: flex;
  height: 26px;
  gap: 1px;
  border-bottom: 1px solid #c4c6c8;
}

.tab {
  padding: 0 20px 2px;
  border-top: 1px solid #d6d8da;
  background: #cdd1d3;
  font-size: 15px;
  color: #55585b;
}

.tab:first-child {
  padding: 0 20px 2px 11px;
}

.tab.active {
  margin-bottom: -1px;
  padding-bottom: 3px;
  border-top-color: #8d8f91;
  background: #f8f8f8;
  color: #222;
}

.tab-tools {
  display: flex;
  align-items: center;
  gap: 7px;
  margin-left: auto;
  padding: 0 4px 8px 0;
}

.tab-tools button:not(.caret-btn) svg {
  width: 16px;
  height: 16px;
}

/* ribbon */
.ribbon {
  display: flex;
  height: 113px;
  background: linear-gradient(#f8f8f8 87px, #edeef0 87px);
  border-bottom: 1px solid #9b9da0;
}

.group {
  display: flex;
  flex-direction: column;
  flex: none;
  border-right: 1px solid #b9bbbd;
}

.group-body {
  display: flex;
  height: 87px;
  padding: 2px 4px;
}

.big {
  flex-direction: column;
  justify-content: flex-start;
  width: 54px;
  height: 83px;
  padding-top: 3px;
  border: 1px solid transparent;
  line-height: 17px;
  white-space: nowrap;
}

.big svg {
  width: 32px;
  height: 32px;
  margin-bottom: 9px;
}

.big.pressed {
  border-color: #a5a8aa;
  background: #dee0e2;
}

.small-col {
  display: flex;
  flex-direction: column;
  justify-content: space-between;
  padding: 4px 3px 5px 5px;
}

.small {
  justify-content: flex-start;
  gap: 5px;
  height: 18px;
  white-space: nowrap;
}

.small svg {
  width: 16px;
  height: 16px;
}

.group-label {
  display: flex;
  align-items: center;
  justify-content: center;
  gap: 3px;
  height: 26px;
  white-space: nowrap;
}

.group-label svg {
  width: 8px;
  height: 5px;
}

.g-param {
  width: 30px;
  overflow: hidden;
}

.g-param .group-body {
  justify-content: flex-end;
  padding: 2px 0;
}

.g-param .big {
  flex: none;
  align-items: flex-end;
  padding-right: 7px;
}

.g-param .big svg {
  margin-right: 7px;
}

.g-section {
  width: 191px;
}

.g-sub {
  width: 115px;
}

.g-joint {
  width: 119px;
}

.g-joint .big,
.g-element .big {
  width: 56px;
}

.g-element {
  width: 171px;
}

.g-element .group-body {
  padding: 2px 0 2px 3px;
}

.g-element .small-col {
  padding-left: 4px;
}

.g-util {
  width: 127px;
}

.g-util .group-body,
.g-draw .group-body {
  padding: 2px;
}

.g-util .big {
  width: 42px;
}

.g-draw {
  width: 131px;
}

.g-info {
  width: 63px;
}

/* model tree */
.body {
  display: flex;
  flex: 1;
  min-height: 0;
  border-bottom: 2px solid #929497;
}

.navigator {
  display: flex;
  flex-direction: column;
  flex: none;
  width: 271px;
  border-right: 2px solid #9fa1a4;
  background: #eff0f2;
}

.nav-tabs {
  display: flex;
  height: 30px;
  border-top: 2px solid #9b9c9e;
  background: #cbcdcf;
}

.nav-tab {
  flex: none;
  gap: 6px;
  padding: 0 8px;
  border-right: 1px solid #999c9e;
  background: #d9dbdd;
  color: #6b6e71;
  white-space: nowrap;
}

.nav-tab svg {
  width: 18px;
  height: 18px;
}

.nav-tab.browser {
  gap: 4px;
  width: 99px;
  justify-content: flex-end;
}

.nav-tools,
.search-row {
  display: flex;
  align-items: center;
  justify-content: flex-end;
  gap: 9px;
  padding-right: 10px;
}

.nav-tools {
  height: 28px;
}

.nav-tools svg {
  width: 20px;
  height: 20px;
}

.nav-tools .caret-btn svg {
  width: 8px;
  height: 5px;
}

.search-row {
  height: 26px;
}

.search-row > button:not(.caret-btn) svg {
  width: 16px;
  height: 16px;
}

.search-box {
  display: flex;
  flex: 1;
  align-items: center;
  height: 25px;
  padding-right: 5px;
  border: 1px solid #bcbfc1;
  border-left: none;
  background: #fff;
}

.search-box input {
  flex: 1;
  min-width: 0;
  border: none;
  outline: none;
}

.search-box svg {
  width: 9px;
  height: 9px;
}

.tree {
  display: flex;
  flex: 1;
  min-height: 0;
  margin: 3px 7px 4px 0;
  border-top: 1px solid #c0c2c4;
  background: #fefdff;
}

.tree ul {
  flex: 1;
  overflow: hidden;
}

.tree li {
  height: 24px;
  padding-left: 1px;
  line-height: 24px;
  white-space: nowrap;
}

.tree li span {
  display: inline-block;
  height: 22px;
  line-height: 22px;
}

.tree .root {
  margin-left: -8px;
}

.tree .datum-node {
  margin-left: -4px;
}

.tree .csys {
  color: #b5b5b8;
}

.tree .selected {
  padding-right: 2px;
  background: #ade1fb;
}

.scrollbar {
  display: flex;
  flex-direction: column;
  width: 15px;
  border: 1px solid #d3d5d7;
  background: #dfe1e3;
}

.scrollbar button {
  height: 15px;
  background: #fafafa;
}

.scrollbar svg {
  width: 7px;
  height: 4px;
}

.thumb {
  flex: 530;
  border-top: 1px solid #b9bbbd;
  border-bottom: 1px solid #b9bbbd;
  background: #fafafa;
}

.track {
  flex: 170;
}

/* graphics area */
.canvas {
  position: relative;
  flex: 1;
  min-width: 0;
  padding: 157px 0 0 119px;
  overflow: hidden;
  background: #e8eaed;
}

.view-tools {
  position: absolute;
  top: 7px;
  left: 542px;
  display: flex;
  align-items: center;
  gap: 4px;
  height: 31px;
  padding: 0 4px;
  border: 1px solid #a8aaac;
  background: #fbfbfb;
}

.view-tools button {
  width: 22px;
  height: 22px;
  border: 1px solid transparent;
}

.view-tools button.on {
  border-color: #b2b4b6;
  background: #e0e1e3;
}

.view-tools button:not(.on) + .on {
  margin-left: 3px;
}

.view-tools svg {
  width: 17px;
  height: 17px;
}

.model {
  width: 450px;
  height: 480px;
  overflow: visible;
}

.datum text,
.datum-top {
  font-size: 42px;
}

.datum {
  fill: #7c4b55;
}

.datum .axis-name {
  fill: #111;
}

.datum-top {
  fill: #18b31c;
}

.status {
  height: 37px;
  padding: 8px 18px;
  background: #eff0f2;
}

/* element definition dialog */
.dialog {
  position: absolute;
  top: 119px;
  right: 0;
  bottom: 0;
  left: 1172px;
  display: flex;
  flex-direction: column;
  overflow: hidden;
  border-top: 1px solid #8e9193;
  border-left: 1px solid #8e9193;
  background: #eff0f2;
}

.dialog h2 {
  height: 31px;
  padding-left: 80px;
  background: #dadddd;
  line-height: 32px;
  text-align: center;
  color: #222;
}

.dialog-body {
  flex: 1;
  padding: 16px 0 0 11px;
}

.collapse {
  width: 13px;
  height: 16px;
  border: 1px solid #9c9ea0;
  background: #fff;
}

.collapse svg {
  width: 12px;
  height: 14px;
}

.diagram {
  height: 300px;
  margin-top: 5px;
  overflow: hidden;
  background: #fff;
}

.diagram svg {
  width: 643px;
  height: 300px;
}

.dimension {
  font-family: "Liberation Sans", sans-serif;
  font-size: 34px;
  fill: #4a4a4a;
}

.form {
  display: flex;
  height: 258px;
  padding: 10px 0;
  border-bottom: 1px solid #c3c5c7;
}

.form h3 {
  font-weight: 500;
  -webkit-text-stroke: 0.3px #3e4043;
}

.col {
  flex: none;
  border-right: 1px solid #b9bbbd;
}

.info {
  width: 162px;
  padding-top: 1px;
}

.info p {
  margin-top: 6px;
}

.values {
  width: 193px;
  padding: 0 6px 0 5px;
}

.values-head {
  display: flex;
  align-items: center;
  justify-content: space-between;
  margin-bottom: 5px;
}

.ruler {
  width: 24px;
  height: 24px;
  border: 1px solid #aeb0b2;
  background: #f8f8f8;
}

.ruler svg {
  width: 18px;
  height: 18px;
}

.field {
  display: flex;
  align-items: center;
  justify-content: space-between;
  height: 25px;
  margin-bottom: 5px;
}

.box {
  display: flex;
  align-items: center;
  width: 74px;
  height: 25px;
  padding: 0 4px;
  border: 1px solid #aeb0b2;
  background: #fff;
}

.box input {
  width: 100%;
  padding: 0;
  border: none;
  outline: none;
  background: none;
  font: inherit;
  color: inherit;
}

.box.editing input {
  width: 21px;
}

.edit-caret {
  width: 1px;
  height: 17px;
  background: #000;
}

.options {
  width: 180px;
  padding: 1px 0 0 5px;
}

.options label {
  display: flex;
  align-items: center;
  gap: 7px;
  margin: 8px 0 10px 2px;
}

.options input {
  width: 12px;
  height: 12px;
  margin: 0;
  appearance: none;
  border: 1px solid #77797b;
  background: #fff;
}

.refs {
  flex: 1;
  padding: 4px 0 0 10px;
  border-right: none;
  white-space: nowrap;
}

.refs h3 {
  margin-bottom: 9px;
}

.ref {
  display: flex;
  align-items: center;
  gap: 11px;
  height: 28px;
  margin-bottom: 5px;
}

.ref button {
  flex: none;
  width: 28px;
  height: 28px;
  border: 1px solid #b4b6b8;
  background: #f8f8f8;
}

.ref svg {
  width: 28px;
  height: 28px;
}

.refs hr {
  height: 1px;
  margin: 15px 0 11px;
  border: none;
  background: #c3c5c7;
}

.refs hr + h3 {
  margin-bottom: 5px;
}

.sizes {
  width: 227px;
  height: 217px;
  margin-top: 10px;
  padding-right: 1px;
  border: 1px solid #a6a8aa;
  background: #fff;
}

.sizes-head {
  height: 24px;
  padding-left: 7px;
  border-bottom: 1px solid #c0c2c4;
  background: #f9f9f9;
  line-height: 27px;
  color: #222;
}

.sizes-body {
  display: flex;
  height: 190px;
}

.sizes-body ul {
  flex: 1;
}

.sizes-body li {
  height: 19px;
  padding-left: 6px;
  line-height: 19px;
}

.sizes-body .thumb {
  flex: 65;
}

.sizes-body .track {
  flex: 95;
}

.dialog-footer {
  display: flex;
  justify-content: flex-end;
  height: 39px;
  padding: 10px 1px 0 0;
  border-top: 1px solid #c3c5c7;
}

.ok {
  width: 66px;
  height: 25px;
  border: 1px solid #85cbe9;
  background: #a0e0fd;
}

/* taskbar */
.taskbar {
  display: flex;
  height: 11px;
  overflow: hidden;
  border-top: 1px solid #15100d;
  background: linear-gradient(90deg, #9a7b66, #8b6d58 30%, #67452f 50%, #a17a5c 85%, #5e4232);
}

.task-start {
  flex: none;
  width: 52px;
  border-right: 1px solid #4a382c;
  background: linear-gradient(100deg, #8d7667, #d6c8bd);
}

.task {
  flex: none;
  align-items: flex-start;
  width: 53px;
}

.task.lit {
  justify-content: flex-start;
  width: 80px;
  padding-left: 8px;
  border-left: 1px solid #e5dad0;
  background: linear-gradient(100deg, #d9cbc0, #a48d7e);
}

.task svg {
  width: 28px;
  height: 28px;
}

.clock {
  margin-left: auto;
  padding: 2px 23px 0 0;
  color: #fff;
}

.show-desktop {
  width: 14px;
  border-left: 1px solid #2d211a;
  background: #947b6b;
}

/* annotation laid over both windows */
.arrow {
  position: absolute;
  top: 541px;
  left: 793px;
  width: 956px;
  height: 86px;
  overflow: visible;
  pointer-events: none;
}

.watermark {
  position: absolute;
  right: 18px;
  bottom: 4px;
  width: 168px;
  height: 80px;
  pointer-events: none;
}

.brand {
  padding-top: 14px;
  font-family: "Noto Sans CJK SC", sans-serif;
  font-size: 41px;
  font-style: italic;
  font-weight: 300;
  line-height: 44px;
  color: #111;
  white-space: nowrap;
}

.wild {
  color: #fb6a36;
}

.flame {
  position: absolute;
  top: 0;
  left: 65px;
  width: 18px;
  height: 46px;
}

.site {
  font-family: "Liberation Sans", sans-serif;
  font-size: 18px;
  font-style: italic;
  line-height: 20px;
  color: #8b8e90;
}
</style>
